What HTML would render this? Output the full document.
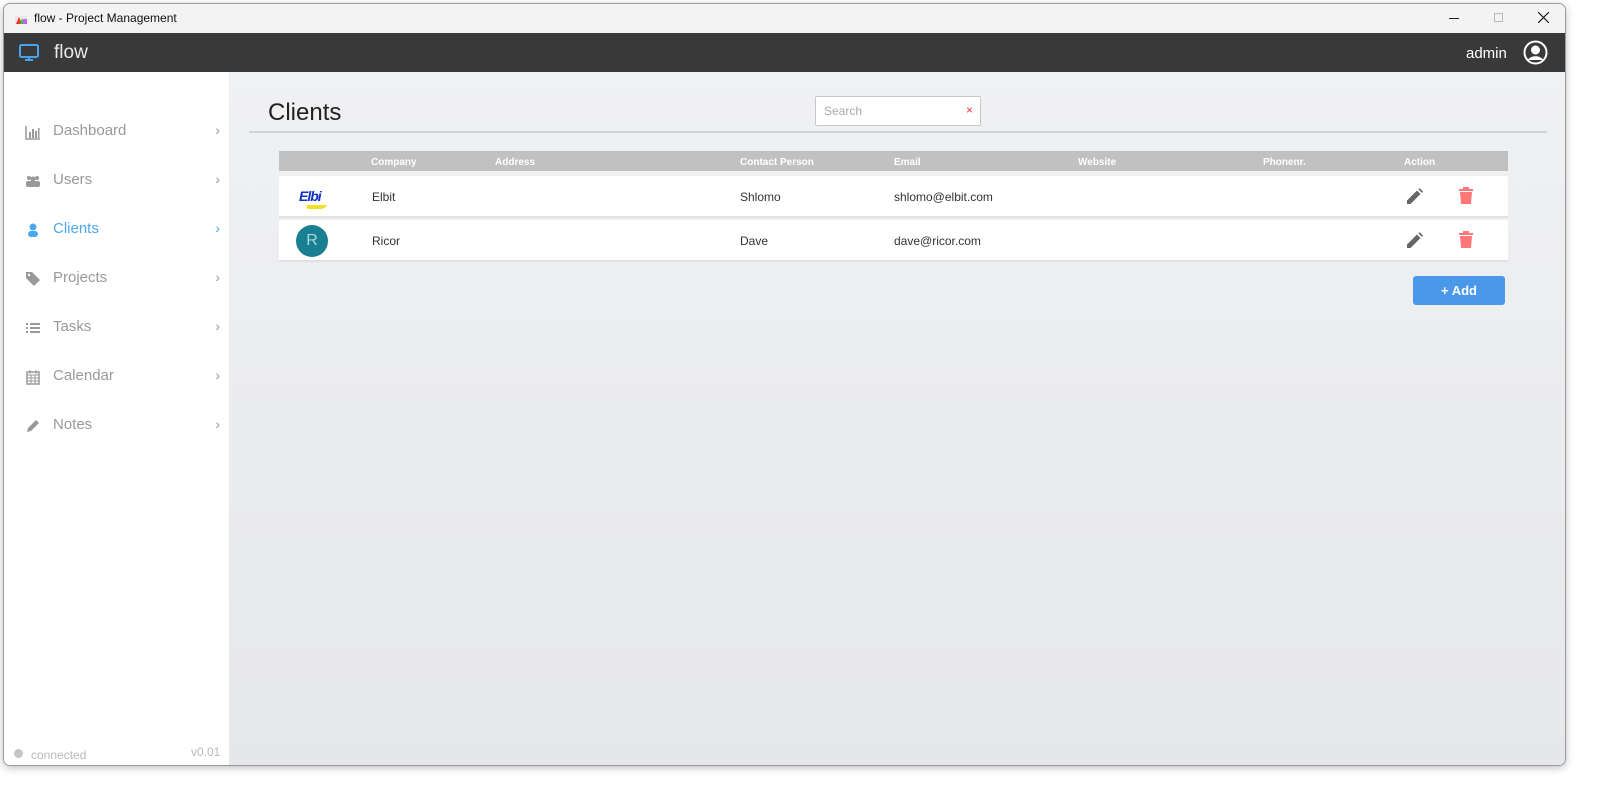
<!DOCTYPE html>
<html><head><meta charset="utf-8"><style>
*{box-sizing:border-box;margin:0;padding:0}
body{width:1607px;height:786px;background:#fff;font-family:"Liberation Sans",sans-serif;position:relative;overflow:hidden}
.win{position:absolute;left:3px;top:3px;width:1563px;height:763px;border:1px solid #9a9a9a;border-radius:7px;overflow:hidden;box-shadow:0 2px 8px rgba(0,0,0,.25)}
.title{position:absolute;left:0;top:0;width:100%;height:29px;background:#f3f3f3;font-size:12px;color:#111}
.hdr{position:absolute;left:0;top:29px;width:100%;height:39px;background:#393939;color:#fff}
.side{position:absolute;left:0;top:68px;width:225px;height:695px;background:#fff}
.main{position:absolute;left:225px;top:68px;right:0;height:695px;background:linear-gradient(#f0f1f3,#e6e7ea)}
.nav{position:absolute;left:21px;font-size:15px;color:#999;width:195px;height:20px}
.nav .ic{position:absolute;left:0;top:2px;width:16px;height:16px}
.nav span{position:absolute;left:28px;top:0}
.nav b{position:absolute;right:0;top:0;font-weight:normal;font-size:14px}
.th{position:absolute;font-size:10px;font-weight:bold;color:#fff;top:6px}
.row{position:absolute;left:50px;width:1229px;height:42px;background:#fff;border-bottom:2px solid #e2e2e4}
.c{position:absolute;font-size:12px;color:#333;top:14px}
</style></head><body>
<div class="win">
 <div class="title">
  <svg style="position:absolute;left:10px;top:8px" width="14" height="13"><rect x="1" y="4" width="12" height="8" fill="#e8e8e8"/><polygon points="2,12 5,5 8,12" fill="#e33"/><polygon points="6,12 8,6 10,12" fill="#3c3"/><rect x="9" y="7" width="4" height="5" fill="#b6e"/></svg>
  <div style="position:absolute;left:30px;top:7px">flow - Project Management</div>
  <div style="position:absolute;left:1445px;top:14px;width:10px;height:1px;background:#222"></div>
  <div style="position:absolute;left:1490px;top:9px;width:9px;height:9px;border:1px solid #bbb"></div>
  <svg style="position:absolute;left:1534px;top:8px" width="11" height="11"><path d="M0 0L11 11M11 0L0 11" stroke="#222" stroke-width="1.2"/></svg>
 </div>
 <div class="hdr">
  <svg style="position:absolute;left:15px;top:11px" width="20" height="17"><rect x="1" y="1" width="18" height="12" rx="1.5" fill="none" stroke="#4aa3f0" stroke-width="2"/><path d="M6 16h8M10 13v3" stroke="#4aa3f0" stroke-width="2"/></svg>
  <div style="position:absolute;left:50px;top:9px;font-size:19px;color:#e8e8e8">flow</div>
  <div style="position:absolute;left:1462px;top:12px;font-size:15px">admin</div>
  <svg style="position:absolute;left:1519px;top:7px" width="25" height="25"><circle cx="12.5" cy="12.5" r="11" fill="none" stroke="#fff" stroke-width="2"/><circle cx="12.5" cy="10" r="4.5" fill="#fff"/><path d="M5 20c2-5 13-5 15 0" fill="#fff"/></svg>
 </div>
 <div class="side">
  <div class="nav" style="top:50px"><svg class="ic" viewBox="0 0 16 16"><path d="M1 2v13h14" stroke="#999" stroke-width="1.5" fill="none"/><rect x="4" y="8" width="2" height="6" fill="#999"/><rect x="7" y="5" width="2" height="9" fill="#999"/><rect x="10" y="7" width="2" height="7" fill="#999"/><rect x="13" y="4" width="1.5" height="10" fill="#999"/></svg><span>Dashboard</span><b>›</b></div>
  <div class="nav" style="top:99px"><svg class="ic" viewBox="0 0 16 16"><circle cx="4" cy="5" r="2" fill="#999"/><circle cx="12" cy="5" r="2" fill="#999"/><circle cx="8" cy="6" r="2.5" fill="#999"/><rect x="1" y="8" width="14" height="6" rx="2" fill="#999"/></svg><span>Users</span><b>›</b></div>
  <div class="nav" style="top:148px;color:#4aa8f2"><svg class="ic" viewBox="0 0 16 16"><circle cx="8" cy="5" r="3.5" fill="#4aa8f2"/><rect x="3" y="9" width="10" height="6" rx="3" fill="#4aa8f2"/></svg><span>Clients</span><b>›</b></div>
  <div class="nav" style="top:197px"><svg class="ic" viewBox="0 0 16 16"><path d="M1 1h6l8 8-6 6-8-8z" fill="#999"/><circle cx="4" cy="4" r="1.2" fill="#fff"/></svg><span>Projects</span><b>›</b></div>
  <div class="nav" style="top:246px"><svg class="ic" viewBox="0 0 16 16"><g fill="#999"><rect x="1" y="3" width="2" height="2"/><rect x="1" y="7" width="2" height="2"/><rect x="1" y="11" width="2" height="2"/><rect x="5" y="3" width="10" height="2"/><rect x="5" y="7" width="10" height="2"/><rect x="5" y="11" width="10" height="2"/></g></svg><span>Tasks</span><b>›</b></div>
  <div class="nav" style="top:295px"><svg class="ic" viewBox="0 0 16 16"><rect x="2" y="3" width="12" height="12" fill="none" stroke="#999" stroke-width="1.5"/><path d="M2 6h12M5 1v4M11 1v4M2 9h12M2 12h12M6 6v9M10 6v9" stroke="#999"/></svg><span>Calendar</span><b>›</b></div>
  <div class="nav" style="top:344px"><svg class="ic" viewBox="0 0 16 16"><path d="M2 14l1-4 8-8 3 3-8 8z" fill="#999"/></svg><span>Notes</span><b>›</b></div>
  <div style="position:absolute;left:10px;top:677px;width:9px;height:9px;border-radius:50%;background:#c4c4c4"></div>
  <div style="position:absolute;left:27px;top:676px;font-size:12px;color:#b8b8b8">connected</div>
  <div style="position:absolute;left:187px;top:673px;font-size:12px;color:#b8b8b8">v0.01</div>
 </div>
 <div class="main">
  <div style="position:absolute;left:39px;top:27px;font-size:24px;color:#222">Clients</div>
  <div style="position:absolute;left:586px;top:24px;width:166px;height:30px;background:#fff;border:1px solid #c8c8c8;border-radius:2px"><span style="position:absolute;left:8px;top:7px;font-size:12px;color:#aaa">Search</span><span style="position:absolute;left:150px;top:6px;font-size:12px;color:#e33">×</span></div>
  <div style="position:absolute;left:20px;top:59px;width:1298px;height:2px;background:#d2d3d6"></div>
  <div style="position:absolute;left:50px;top:79px;width:1229px;height:20px;background:#c1c1c1">
   <div class="th" style="left:92px">Company</div><div class="th" style="left:216px">Address</div><div class="th" style="left:461px">Contact Person</div><div class="th" style="left:615px">Email</div><div class="th" style="left:799px">Website</div><div class="th" style="left:984px">Phonenr.</div><div class="th" style="left:1125px">Action</div>
  </div>
  <div class="row" style="top:104px">
   <div style="position:absolute;left:20px;top:12px;font-size:14px;font-weight:bold;font-style:italic;color:#1030c8;letter-spacing:-1px">Elbi</div>
   <div style="position:absolute;left:27px;top:29px;width:20px;height:4px;background:#f3e020;border-radius:0 0 8px 8px;transform:skewX(-30deg)"></div>
   <div class="c" style="left:93px">Elbit</div><div class="c" style="left:461px">Shlomo</div><div class="c" style="left:615px">shlomo@elbit.com</div>
   <svg style="position:absolute;left:1127px;top:12px" width="17" height="17" viewBox="0 0 17 17"><path d="M1 16v-3.5L11 2.5 14.5 6 4.5 16z M12.3 1.2l1.4-1 3.3 3.3-1 1.4z" fill="#666"/></svg>
   <svg style="position:absolute;left:1180px;top:11px" width="14" height="18" viewBox="0 0 14 18"><rect x="0" y="2" width="14" height="2" fill="#f77"/><rect x="4" y="0" width="6" height="2" fill="#f77"/><path d="M1 5h12l-1 12H2z" fill="#f77"/></svg>
  </div>
  <div class="row" style="top:148px">
   <div style="position:absolute;left:17px;top:5px;width:32px;height:32px;border-radius:50%;background:#1a7f92;color:#a8d8e0;font-size:16px;text-align:center;line-height:32px">R</div>
   <div class="c" style="left:93px">Ricor</div><div class="c" style="left:461px">Dave</div><div class="c" style="left:615px">dave@ricor.com</div>
   <svg style="position:absolute;left:1127px;top:12px" width="17" height="17" viewBox="0 0 17 17"><path d="M1 16v-3.5L11 2.5 14.5 6 4.5 16z M12.3 1.2l1.4-1 3.3 3.3-1 1.4z" fill="#666"/></svg>
   <svg style="position:absolute;left:1180px;top:11px" width="14" height="18" viewBox="0 0 14 18"><rect x="0" y="2" width="14" height="2" fill="#f77"/><rect x="4" y="0" width="6" height="2" fill="#f77"/><path d="M1 5h12l-1 12H2z" fill="#f77"/></svg>
  </div>
  <div style="position:absolute;left:1184px;top:204px;width:92px;height:29px;background:#4a98ea;border-radius:3px;color:#fff;font-weight:bold;font-size:13px;text-align:center;line-height:29px">+ Add</div>
 </div>
</div>
</body></html>
